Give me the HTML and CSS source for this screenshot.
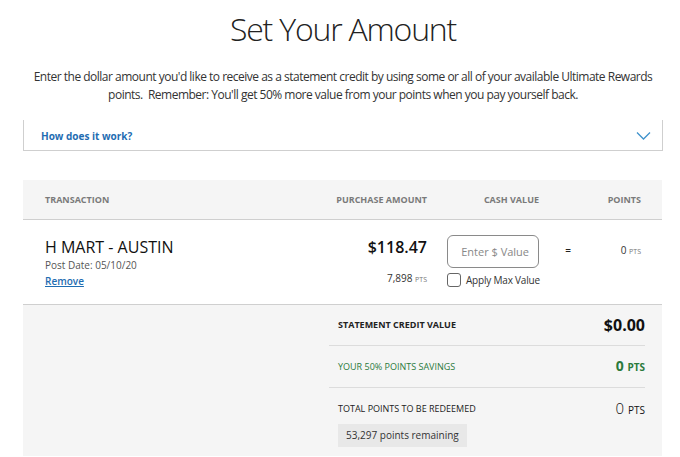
FILE: index.html
```html
<!DOCTYPE html>
<html>
<head>
<meta charset="utf-8">
<link rel="stylesheet" href="styles.css">
</head>
<body>
<div class="page">
  <h1 class="title">Set Your Amount</h1>
  <p class="intro">Enter the dollar amount you'd like to receive as a statement credit by using some or all of your available Ultimate Rewards<br>points.&nbsp; Remember: You'll get 50% more value from your points when you pay yourself back.</p>
  <div class="accordion">
    <span class="acc-label">How does it work?</span>
    <svg class="chev" width="15" height="9" viewBox="0 0 15 9"><polyline points="1,1.5 7.5,8 14,1.5" fill="none" stroke="#3f93cc" stroke-width="1.3"/></svg>
  </div>
  <div class="table">
    <div class="grid thead">
      <div>TRANSACTION</div>
      <div class="r">PURCHASE AMOUNT</div>
      <div class="r">CASH VALUE</div>
      <div></div>
      <div class="r">POINTS</div>
    </div>
    <div class="grid trow">
      <div class="txn">
        <div class="merchant">H MART - AUSTIN</div>
        <div class="postdate">Post Date: 05/10/20</div>
        <a class="remove" href="#">Remove</a>
      </div>
      <div class="purchase r">
        <div class="amount">$118.47</div>
        <div class="pts-line">7,898 <span class="pts-sm">PTS</span></div>
      </div>
      <div class="cash">
        <div class="input">Enter $ Value</div>
        <label class="maxval"><span class="checkbox"></span>Apply Max Value</label>
      </div>
      <div class="eq">=</div>
      <div class="points r">0 <span class="pts-sm">PTS</span></div>
    </div>
    <div class="summary-wrap">
      <div class="summary">
        <div class="srow">
          <span class="slabel bold">STATEMENT CREDIT VALUE</span>
          <span class="sval dollars">$0.00</span>
        </div>
        <div class="srow green">
          <span class="slabel">YOUR 50% POINTS SAVINGS</span>
          <span class="sval savings">0 <span class="unit">PTS</span></span>
        </div>
        <div class="srow last">
          <div class="sline">
            <span class="slabel">TOTAL POINTS TO BE REDEEMED</span>
            <span class="sval total">0 <span class="unit">PTS</span></span>
          </div>
          <div class="badge">53,297 points remaining</div>
        </div>
      </div>
    </div>
  </div>
</div>
</body>
</html>
```
FILE: styles.css
```css
* { box-sizing: border-box; }
html, body { margin: 0; padding: 0; background: #fff; }
body { font-family: "Open Sans", "Liberation Sans", sans-serif; color: #222; }

.page { padding: 9px 17px 0 23px; }

.title {
  margin: 0;
  font-size: 32px;
  font-weight: 300;
  line-height: 40px;
  letter-spacing: -1.2px;
  text-align: center;
  color: #222;
}

.intro {
  margin: 19px 0 0;
  font-size: 12px;
  line-height: 18px;
  letter-spacing: -0.5px;
  white-space: nowrap;
  text-align: center;
  color: #333;
}

.accordion {
  margin-top: 16px;
  height: 31px;
  border: 1px solid #cfcfcf;
  border-top: none;
  display: flex;
  align-items: center;
  justify-content: space-between;
  padding: 1px 11px 0 17px;
}
.acc-label { font-size: 10px; font-weight: 700; color: #1f6db2; }
.chev { display: block; margin-top: -1px; }

.table { margin-top: 29px; width: 639px; }

.grid {
  display: grid;
  grid-template-columns: 1fr 107px 112px 58px 44px;
  padding: 0 21px 0 22px;
}
.r { text-align: right; }

.thead {
  background: #f5f5f5;
  height: 40px;
  align-items: center;
  border-bottom: 1px solid #cfcfcf;
  font-size: 9px;
  font-weight: 700;
  color: #7a7a7a;
}

.trow {
  padding-top: 16px;
  padding-bottom: 16px;
  align-items: start;
  border-bottom: 1px solid #cfcfcf;
}

.merchant { font-size: 16px; line-height: 22px; color: #111; }
.postdate { font-size: 10px; line-height: 14px; color: #555; }
.remove {
  display: block;
  width: fit-content;
  margin-top: 2px;
  font-size: 10px;
  line-height: 14px;
  font-weight: 600;
  color: #1f6db2;
  text-decoration: underline;
}

.amount { font-size: 16px; line-height: 22px; font-weight: 600; color: #111; }
.pts-line { margin-top: 13px; font-size: 10px; line-height: 14px; color: #333; }
.pts-sm { font-size: 7px; color: #777; }

.cash { display: flex; flex-direction: column; align-items: flex-start; padding-left: 20px; }
.input {
  margin-top: -1px;
  width: 92px;
  height: 33px;
  border: 1px solid #8a8a8a;
  border-radius: 6px;
  font-size: 11px;
  line-height: 31px;
  color: #888;
  text-align: right;
  padding-right: 9px;
}
.maxval {
  margin-top: 5px;
  display: flex;
  align-items: center;
  white-space: nowrap;
  font-size: 10px;
  line-height: 14px;
  letter-spacing: -0.2px;
  color: #333;
}
.checkbox {
  flex: none;
  width: 14px;
  height: 14px;
  border: 1px solid #666;
  border-radius: 3px;
  margin-right: 5px;
  background: #fff;
}

.eq { text-align: center; font-size: 10px; line-height: 28px; color: #222; font-weight: 600; }
.points { font-size: 10px; line-height: 28px; color: #333; }

.summary-wrap {
  background: #f5f5f5;
  padding: 0 17px 0 306px;
}
.summary { display: flex; flex-direction: column; }
.srow {
  padding: 12px 0 12px 9px;
  border-bottom: 1px solid #dcdcdc;
  display: flex;
  justify-content: space-between;
  align-items: center;
  line-height: 16px;
}
.srow.last { display: block; border-bottom: none; padding-bottom: 9px; }
.sline { display: flex; justify-content: space-between; align-items: center; line-height: 16px; }

.slabel { font-size: 9px; color: #222; }
.slabel.bold { font-weight: 700; }
.green .slabel { color: #2b7a3c; }

.sval.dollars { font-size: 16px; font-weight: 700; color: #111; }
.sval.savings { font-size: 14px; font-weight: 700; color: #2b7a3c; }
.sval.savings .unit { font-size: 10px; }
.sval.total { font-size: 15px; font-weight: 300; color: #111; }
.sval.total .unit { font-size: 10px; font-weight: 400; }

.badge {
  display: inline-block;
  margin-top: 6px;
  height: 23px;
  padding: 0 8px;
  background: #e8e8e8;
  font-size: 10px;
  line-height: 23px;
  color: #333;
}
```
